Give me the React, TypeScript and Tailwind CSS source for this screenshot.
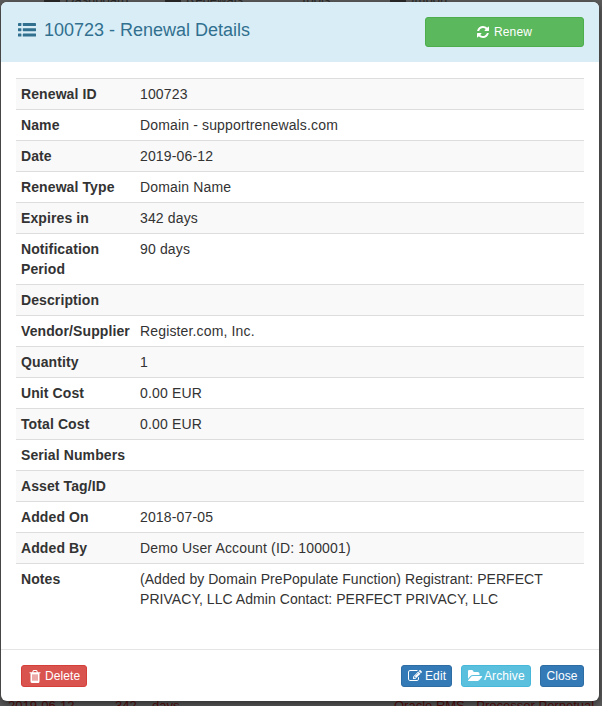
const rows: [string, string][] = [
  ["Renewal ID", "100723"],
  ["Name", "Domain - supportrenewals.com"],
  ["Date", "2019-06-12"],
  ["Renewal Type", "Domain Name"],
  ["Expires in", "342 days"],
  ["Notification Period", "90 days"],
  ["Description", ""],
  ["Vendor/Supplier", "Register.com, Inc."],
  ["Quantity", "1"],
  ["Unit Cost", "0.00 EUR"],
  ["Total Cost", "0.00 EUR"],
  ["Serial Numbers", ""],
  ["Asset Tag/ID", ""],
  ["Added On", "2018-07-05"],
  ["Added By", "Demo User Account (ID: 100001)"],
  ["Notes", "(Added by Domain PrePopulate Function) Registrant: PERFECT PRIVACY, LLC Admin Contact: PERFECT PRIVACY, LLC"],
];

function ListIcon() {
  return (
    <svg viewBox="0 0 18 14" className="h-[14px] w-[18px] shrink-0" fill="currentColor">
      <rect x="0" y="0" width="3.4" height="3" rx="0.4" />
      <rect x="4.8" y="0" width="13.2" height="3" rx="0.4" />
      <rect x="0" y="5.2" width="3.4" height="3" rx="0.4" />
      <rect x="4.8" y="5.2" width="13.2" height="3" rx="0.4" />
      <rect x="0" y="10.6" width="3.4" height="3" rx="0.4" />
      <rect x="4.8" y="10.6" width="13.2" height="3" rx="0.4" />
    </svg>
  );
}

function RefreshIcon() {
  return (
    <svg viewBox="0 0 1536 1792" className="h-[14px] w-[12px] shrink-0" fill="currentColor">
      <path d="M1511 1056q0 5-1 7-64 268-268 434.5t-478 166.5q-146 0-282.5-55t-243.5-157l-129 129q-19 19-45 19t-45-19-19-45v-448q0-26 19-45t45-19h448q26 0 45 19t19 45-19 45l-137 137q71 66 161 102t187 36q134 0 250-65t186-179q11-17 53-117 8-23 30-23h192q13 0 22.5 9.5t9.5 22.5zm25-800v448q0 26-19 45t-45 19h-448q-26 0-45-19t-19-45 19-45l138-138q-148-137-349-137-134 0-250 65t-186 179q-11 17-53 117-8 23-30 23h-199q-13 0-22.5-9.5t-9.5-22.5v-7q65-268 270-434.5t480-166.5q146 0 284 55.5t245 156.5l130-129q19-19 45-19t45 19 19 45z" />
    </svg>
  );
}

function TrashIcon() {
  return (
    <svg viewBox="128 128 1536 1536" className="h-[13px] w-[12px] shrink-0" fill="currentColor" preserveAspectRatio="none">
      <path d="M704 1376v-704q0-14-9-23t-23-9h-64q-14 0-23 9t-9 23v704q0 14 9 23t23 9h64q14 0 23-9t9-23zm256 0v-704q0-14-9-23t-23-9h-64q-14 0-23 9t-9 23v704q0 14 9 23t23 9h64q14 0 23-9t9-23zm256 0v-704q0-14-9-23t-23-9h-64q-14 0-23 9t-9 23v704q0 14 9 23t23 9h64q14 0 23-9t9-23zm-544-992h448l-48-117q-7-9-17-11h-317q-10 2-17 11zm928 32v64q0 14-9 23t-23 9h-96v948q0 83-47 143.5t-113 60.5h-832q-66 0-113-58.5t-47-141.5v-952h-96q-14 0-23-9t-9-23v-64q0-14 9-23t23-9h309l70-167q15-37 54-63t79-26h320q40 0 79 26t54 63l70 167h309q14 0 23 9t9 23z" />
    </svg>
  );
}

function EditIcon() {
  return (
    <svg viewBox="0 0 1792 1792" className="h-[14px] w-[14px] shrink-0" fill="currentColor">
      <path d="M888 1184l116-116-152-152-116 116v56h96v96h56zm440-720q-16-16-33 1l-350 350q-17 17-1 33t33-1l350-350q17-17 1-33zm80 594v190q0 119-84.5 203.5t-203.5 84.5h-832q-119 0-203.5-84.5t-84.5-203.5v-832q0-119 84.5-203.5t203.5-84.5h832q63 0 117 25 15 7 18 23 3 17-9 29l-49 49q-14 14-32 8-23-6-45-6h-832q-66 0-113 47t-47 113v832q0 66 47 113t113 47h832q66 0 113-47t47-113v-126q0-13 9-22l64-64q15-15 35-7t20 29zm-96-738l288 288-672 672h-288v-288zm444 132l-92 92-288-288 92-92q28-28 68-28t68 28l152 152q28 28 28 68t-28 68z" />
    </svg>
  );
}

function FolderIcon() {
  return (
    <svg viewBox="0 0 1920 1792" className="h-[14px] w-[15px] shrink-0" fill="currentColor">
      <path d="M1815 952q0 31-31 66l-336 396q-43 51-120.5 86.5t-143.5 35.5h-1088q-34 0-60.5-13t-26.5-43q0-31 31-66l336-396q43-51 120.5-86.5t143.5-35.5h1088q34 0 60.5 13t26.5 43zm-343-344v160h-832q-94 0-197 47.5t-164 119.5l-337 396-5 6q0-4-.5-12.5t-.5-12.5v-960q0-92 66-158t158-66h320q92 0 158 66t66 158v32h544q92 0 158 66t66 158z" />
    </svg>
  );
}

export default function App() {
  return (
    <div className="relative h-[706px] w-[602px] overflow-hidden bg-[#5b5b5b] font-['Liberation_Sans',Arial,sans-serif] text-[14px] leading-[20px] text-[#333]">
      <div className="absolute left-[44px] top-[-10px] flex items-center text-[13px] text-[#2a2a2a]">
        <span className="mr-[5px] h-[14px] w-[16px] bg-[#2a2a2a]" />
        <span className="w-[100px]">Dashboard</span>
        <span className="mr-[5px] h-[14px] w-[16px] bg-[#2a2a2a]" />
        <span className="w-[114px]">Renewals</span>
        <span className="w-[90px]">Tools</span>
        <span className="mr-[5px] h-[14px] w-[16px] bg-[#2a2a2a]" />
        <span>Import</span>
      </div>
      <div className="absolute bottom-[-10px] left-[8px] flex text-[13px] text-[#5a1010]">
        <span className="w-[107px]">2019-06-12</span>
        <span className="w-[37px]">342</span>
        <span className="w-[242px]">days</span>
        <span>Oracle RMS - Processor Perpetual</span>
      </div>
      <div className="relative ml-px mt-[2px] flex h-[699px] w-[598px] flex-col overflow-hidden rounded-[6px] bg-white shadow-[0_3px_9px_rgba(0,0,0,0.5)]">
        <div className="flex h-[60px] shrink-0 items-start justify-between bg-[#d9edf7] pl-[17px] pr-[15px] pt-[15px]">
          <h4 className="flex h-[26px] items-center gap-[8px] text-[18px] text-[#31708f]">
            <ListIcon />
            <span>100723 - Renewal Details</span>
          </h4>
          <button className="flex h-[30px] w-[159px] items-center justify-center gap-[5px] rounded-[3px] border border-[#4cae4c] bg-[#5cb85c] text-[12px] tracking-[0.1px] text-white">
            <RefreshIcon />
            <span>Renew</span>
          </button>
        </div>
        <div className="flex-1 px-[15px] pt-[16px]">
          {rows.map(([k, v], i) => {
            const last = i === rows.length - 1;
            return (
              <div key={k} className={`flex border-t border-[#ddd] ${i % 2 === 0 && !last ? "bg-[#f9f9f9]" : "bg-white"}`}>
                <div className="w-[119px] shrink-0 p-[5px] font-bold tracking-[0.1px]">{k}</div>
                <div className={`min-h-[30px] flex-1 p-[5px] ${last ? "tracking-[0.05px]" : "tracking-[0.15px]"}`}>{v}</div>
              </div>
            );
          })}
        </div>
        <div className="flex h-[52px] shrink-0 items-start justify-between border-t border-[#e5e5e5] pl-[20px] pr-[15px] pt-[15px]">
          <button className="flex h-[22px] w-[66px] items-center gap-[4px] rounded-[3px] border border-[#d43f3a] bg-[#d9534f] pl-[7px] text-[12px] tracking-[0.1px] text-white">
            <TrashIcon />
            <span>Delete</span>
          </button>
          <div className="flex gap-[9px]">
            <button className="flex h-[22px] w-[51px] items-center gap-[3px] rounded-[3px] border border-[#2e6da4] bg-[#337ab7] pl-[6px] text-[12px] tracking-[0.1px] text-white">
              <EditIcon />
              <span>Edit</span>
            </button>
            <button className="flex h-[22px] w-[70px] items-center gap-[1px] rounded-[3px] border border-[#46b8da] bg-[#5bc0de] pl-[6px] text-[12px] tracking-[0.1px] text-white">
              <FolderIcon />
              <span>Archive</span>
            </button>
            <button className="flex h-[22px] w-[44px] items-center justify-center rounded-[3px] border border-[#2e6da4] bg-[#337ab7] text-[12px] tracking-[0.1px] text-white">
              Close
            </button>
          </div>
        </div>
      </div>
    </div>
  );
}
